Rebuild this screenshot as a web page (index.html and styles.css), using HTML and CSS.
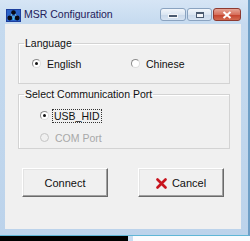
FILE: index.html
```html
<!DOCTYPE html>
<html lang="en">

<head>
    <meta charset="UTF-8">
    <title>MSR Configuration</title>
    <link rel="stylesheet" href="styles.css">
</head>

<body>
    <div class="window">
        <div class="titlebar">
            <svg class="app-icon" width="15" height="13" viewBox="0 0 15 13">
                <rect width="15" height="13" fill="#1d3f9e" />
                <rect x="1" y="1" width="13" height="11" fill="#2a63c8" />
                <path d="M7.5 3 L4 8 M7.5 3 L11 8 M4 8 L11 8" stroke="#7de0f0" stroke-width="1" />
                <circle cx="7.5" cy="3.5" r="2.3" fill="#0a0a14" />
                <circle cx="3.8" cy="9" r="2.4" fill="#0a0a14" />
                <circle cx="11.2" cy="9" r="2.4" fill="#0a0a14" />
                <circle cx="7.5" cy="10" r="1" fill="#46d0e8" />
            </svg>
            <span class="title">MSR Configuration</span>
            <div class="caption-buttons">
                <span class="cap-btn min"><i></i></span>
                <span class="cap-btn max"><i></i></span>
                <span class="cap-btn close">
                    <svg width="10" height="8" viewBox="0 0 10 8">
                        <path d="M1.5 1 L8.5 7 M8.5 1 L1.5 7" stroke="#fff" stroke-width="2" />
                    </svg>
                </span>
            </div>
        </div>

        <div class="frame-body">
            <div class="client">
                <fieldset class="group lang">
                    <legend>Language</legend>
                    <div class="options row">
                        <label class="radio checked"><span class="dot"></span>English</label>
                        <label class="radio"><span class="dot"></span>Chinese</label>
                    </div>
                </fieldset>

                <fieldset class="group port">
                    <legend>Select Communication Port</legend>
                    <div class="options column">
                        <label class="radio checked"><span class="dot"></span><span class="focus">USB_HID</span></label>
                        <label class="radio disabled"><span class="dot"></span>COM Port</label>
                    </div>
                </fieldset>

                <div class="actions">
                    <button class="btn">Connect</button>
                    <button class="btn">
                        <svg class="x-icon" width="11" height="11" viewBox="0 0 11 11">
                            <path d="M1.5 1.5 L9.5 9.5 M9.5 1.5 L1.5 9.5" stroke="#c8141e" stroke-width="2.6"
                                stroke-linecap="round" />
                        </svg>
                        Cancel
                    </button>
                </div>
            </div>
        </div>
    </div>

    <div class="strip">
        <span class="strip-dark"></span>
        <span class="strip-edge"></span>
        <span class="strip-light"></span>
    </div>
</body>

</html>
```

FILE: styles.css
```css
body {
    margin: 0;
    padding: 0;
    width: 250px;
    height: 241px;
    overflow: hidden;
    font-family: 'Liberation Sans', Arial, sans-serif;
    font-size: 10.5px;
    color: #111;
    background: #f4f7fb;
}

.window {
    box-sizing: border-box;
    width: 250px;
    height: 236px;
    display: flex;
    flex-direction: column;
    background: linear-gradient(to bottom, #d6e5f5 0, #c5daef 24px, #bcd3eb 100%);
    border-right: 2px solid #6f9fc6;
    border-bottom: 1px solid #5fb6d6;
}

.titlebar {
    height: 24px;
    display: flex;
    align-items: flex-start;
}

.app-icon {
    margin: 9px 3px 0 6px;
}

.title {
    margin-top: 8px;
    font-size: 10.5px;
    color: #23205a;
}

.caption-buttons {
    margin: 8px 7px 0 auto;
    display: flex;
    gap: 1px;
}

.cap-btn {
    box-sizing: border-box;
    height: 13px;
    display: flex;
    align-items: center;
    justify-content: center;
    border: 1px solid #8aa3c0;
    border-radius: 3px;
    background: linear-gradient(to bottom, #f2f6fb 0, #dbe6f2 50%, #c9d8ea 51%, #d6e3f2 100%);
}

.cap-btn.min {
    width: 26px;
}

.cap-btn.min i {
    display: block;
    width: 8px;
    height: 2px;
    margin-top: 3px;
    background: #4a5a70;
    border: 1px solid #f4f6f9;
}

.cap-btn.max {
    width: 25px;
}

.cap-btn.max i {
    display: block;
    width: 6px;
    height: 3px;
    border: 1px solid #4a5a70;
    border-top-width: 2px;
    background: #f4f6f9;
}

.cap-btn.close {
    width: 28px;
    border-color: #8e3a30;
    background: linear-gradient(to bottom, #e6a596 0, #d7705c 50%, #c4402b 51%, #d26a50 100%);
}

.frame-body {
    flex: 1;
    padding: 0 7px 6px 5px;
    display: flex;
}

.client {
    flex: 1;
    box-sizing: border-box;
    background: #f0f0f0;
    padding: 13px 0 0 13px;
}

.group {
    box-sizing: border-box;
    width: 212px;
    margin: 0;
    padding: 0;
    border: 1px solid #d3d3d3;
    border-radius: 0;
    box-shadow: inset 1px 1px 0 #fff;
}

.group legend {
    margin-left: 5px;
    padding: 0 1px;
    line-height: 13px;
}

.group.lang {
    height: 47px;
}

.group.port {
    height: 61px;
    margin-top: 4px;
}

.options.row {
    display: grid;
    grid-template-columns: 99px auto;
    padding: 7px 0 0 13px;
}

.options.column {
    display: flex;
    flex-direction: column;
    gap: 9px;
    padding: 8px 0 0 21px;
}

.radio {
    display: flex;
    align-items: center;
    height: 13px;
    white-space: nowrap;
}

.radio .dot {
    box-sizing: border-box;
    width: 9px;
    height: 9px;
    margin-right: 6px;
    border-radius: 50%;
    border: 1px solid #8c8c8c;
    border-right-color: #dcdcdc;
    border-bottom-color: #dcdcdc;
    background: #fff;
    display: flex;
    align-items: center;
    justify-content: center;
}

.radio.checked .dot::after {
    content: "";
    width: 3px;
    height: 3px;
    border-radius: 50%;
    background: #111;
}

.radio .focus {
    padding: 0 1px;
    margin-left: -2px;
    outline: 1px dotted #333;
    outline-offset: 0;
}

.radio.disabled {
    color: #a8a8a8;
}

.radio.disabled .dot {
    border-color: #c4c4c4;
    background: #f0f0f0;
}

.actions {
    display: flex;
    gap: 30px;
    margin: 19px 0 0 4px;
}

.btn {
    box-sizing: border-box;
    width: 86px;
    height: 29px;
    display: flex;
    align-items: center;
    justify-content: center;
    gap: 5px;
    padding: 0;
    font-family: inherit;
    font-size: 11px;
    color: #111;
    background: #f0f0f0;
    border: 1px solid;
    border-color: #fff #6a6a6a #6a6a6a #fff;
    box-shadow: inset -1px -1px 0 #a0a0a0, inset 1px 1px 0 #e3e3e3;
    border-radius: 0;
}

.x-icon {
    margin-top: 1px;
}

.strip {
    display: flex;
    height: 5px;
}

.strip-dark {
    width: 128px;
    background: #000;
}

.strip-edge {
    width: 5px;
    background: #c8dcf0;
}

.strip-light {
    flex: 1;
    background: #fbfcfe;
}
```
